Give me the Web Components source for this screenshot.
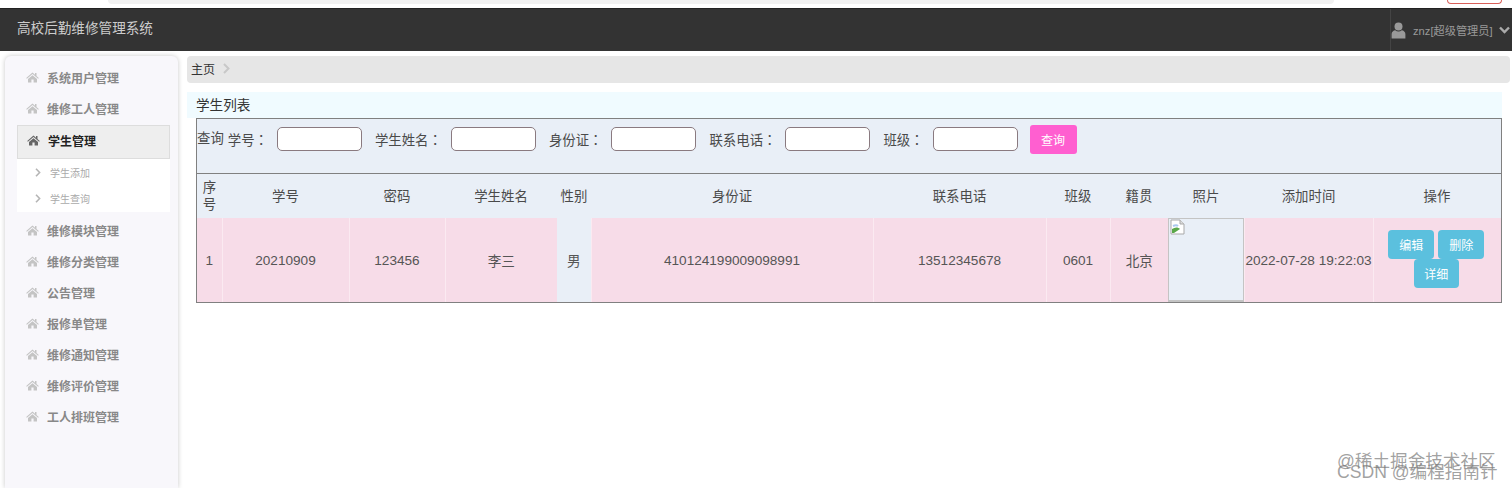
<!DOCTYPE html>
<html lang="zh">
<head>
<meta charset="utf-8">
<title>高校后勤维修管理系统</title>
<style>
  html, body { margin: 0; height: 100%; background: #fff; overflow: hidden; }
  body { font-family: "Liberation Sans", "Noto Sans CJK SC", sans-serif; font-size: 13px; color: #333; }
</style>
</head>
<body>
<admin-app></admin-app>

<template id="home-icon">
  <svg width="13" height="11" viewBox="0 0 13 11" fill="currentColor"><path d="M6.5 0.6 0.2 6l.7.8L6.5 2.1l5.6 4.7.7-.8-2.3-2V1H9v1.7zM2 7v3.6h3.4V7.6h2.2v3H11V7L6.5 3.2z"/></svg>
</template>

<script>
// top browser strip + dark header bar
class TopBar extends HTMLElement {
  constructor() {
    super();
    this.attachShadow({mode: "open"}).innerHTML = `
      <style>
        :host { display: block; }
        #strip { height: 8px; display: flex; background: #fff; }
        #tab { margin-left: 108px; width: 1226px; height: 4px; background: #f1f1f1; border-radius: 0 0 6px 6px; }
        #pill { margin-left: 113px; width: 53px; height: 3px; border: 1px solid #d9605a; border-top: 0; border-radius: 0 0 9px 9px; }
        #bar { height: 43px; background: #333; border-top: 1px solid #222; box-sizing: border-box; display: flex; align-items: center; justify-content: space-between; }
        #brand { margin-left: 17px; margin-top: -6px; color: #ccc; font-size: 13.6px; }
        #user { height: 100%; width: 122px; box-sizing: border-box; border-left: 1px solid #444; display: flex; align-items: center; color: #999; font-size: 11.2px; }
        #user svg.u { flex: none; }
        #name { margin-left: 7px; white-space: nowrap; }
        #user svg.c { margin-left: 6px; flex: none; }
      </style>
      <div id="strip"><div id="tab"></div><div id="pill"></div></div>
      <div id="bar">
        <div id="brand">高校后勤维修管理系统</div>
        <div id="user">
          <svg class="u" width="15" height="17" viewBox="0 0 15 17" fill="#999"><circle cx="7.5" cy="4.5" r="4"/><path d="M0.6 16.5V12c0-2.2 2-3.6 3.6-3.8 1 .8 2.1 1.2 3.3 1.2s2.300-.4 3.300-1.200c1.600.2 3.600 1.600 3.600 3.800v4.500z"/></svg>
          <span id="name">znz[超级管理员]</span>
          <svg class="c" width="11" height="8" viewBox="0 0 11 8" fill="none" stroke="#aaa" stroke-width="2.4"><path d="M1 1.500 5.500 6 10 1.500"/></svg>
        </div>
      </div>`;
  }
}
customElements.define("top-bar", TopBar);

// one left menu entry
class NavItem extends HTMLElement {
  constructor() {
    super();
    const icon = document.getElementById("home-icon").innerHTML;
    this.attachShadow({mode: "open"}).innerHTML = `
      <style>
        :host { display: flex; align-items: center; height: 31px; padding-left: 21px; color: #888; font-size: 12px; font-weight: bold; }
        :host([active]) { height: 34px; margin: 1px 8px 0 12px; padding-left: 9px; padding-bottom: 4px; background: #eee; color: #222; border: 1px solid #ddd; box-sizing: border-box; }
        svg, .i { display: block; }
        .i { color: #c4c4c4; width: 13px; height: 11px; margin-right: 8px; }
        :host([active]) .i { color: #666; }
      </style>
      <span class="i">${icon}</span><slot></slot>`;
  }
}
customElements.define("nav-item", NavItem);

class SubItem extends HTMLElement {
  constructor() {
    super();
    this.attachShadow({mode: "open"}).innerHTML = `
      <style>
        :host { display: flex; align-items: center; height: 26px; padding-left: 18px; color: #aaa; font-size: 10px; }
        svg { margin-right: 9px; }
      </style>
      <svg width="6" height="9" viewBox="0 0 6 9" fill="none" stroke="#b5b5b5" stroke-width="1.600"><path d="M1 .8 4.600 4.500 1 8.200"/></svg><slot></slot>`;
  }
}
customElements.define("sub-item", SubItem);

class SideNav extends HTMLElement {
  constructor() {
    super();
    this.attachShadow({mode: "open"}).innerHTML = `
      <style>
        :host { display: block; width: 173px; margin-left: 5px; background: #f8f7fb; border-radius: 6px 6px 0 0; box-shadow: 0 0 5px rgba(0,0,0,.22); padding-top: 6px; box-sizing: border-box; height: 432px; flex: none; }
        #sub { margin: 0 8px 3px 12px; background: #fff; height: 53px; }
      </style>
      <nav-item>系统用户管理</nav-item>
      <nav-item>维修工人管理</nav-item>
      <nav-item active>学生管理</nav-item>
      <div id="sub"><sub-item>学生添加</sub-item><sub-item>学生查询</sub-item></div>
      <nav-item>维修模块管理</nav-item>
      <nav-item>维修分类管理</nav-item>
      <nav-item>公告管理</nav-item>
      <nav-item>报修单管理</nav-item>
      <nav-item>维修通知管理</nav-item>
      <nav-item>维修评价管理</nav-item>
      <nav-item>工人排班管理</nav-item>`;
  }
}
customElements.define("side-nav", SideNav);

class BreadCrumb extends HTMLElement {
  constructor() {
    super();
    this.attachShadow({mode: "open"}).innerHTML = `
      <style>
        :host { display: flex; align-items: center; height: 27px; box-sizing: border-box; padding: 0 0 2px 4px; background: #e6e6e6; border-radius: 4px; color: #333; font-size: 12px; }
        svg { margin-left: 8px; }
      </style>
      <slot></slot>
      <svg width="7" height="11" viewBox="0 0 7 11" fill="none" stroke="#c8c8c8" stroke-width="2"><path d="M1 1l4.500 4.500L1 10"/></svg>`;
  }
}
customElements.define("bread-crumb", BreadCrumb);

// label comes in the attribute so the colon can get the centred TC glyph
class SearchField extends HTMLElement {
  constructor() {
    super();
    this.attachShadow({mode: "open"}).innerHTML = `
      <style>
        :host { display: flex; align-items: center; color: #4a4a4a; font-size: 13.4px; white-space: nowrap; }
        #label { margin-top: -1px; }
        #colon { font-family: "Liberation Sans", "Noto Sans CJK TC", sans-serif; }
        input { width: 85px; height: 24px; box-sizing: border-box; margin-left: 9px; border: 1px solid #8a7a80; border-radius: 5px; background: #fff; padding: 0; }
      </style>
      <span id="label"></span><input type="text">`;
  }
  connectedCallback() {
    this.shadowRoot.getElementById("label").innerHTML = `${this.getAttribute("label")}<span id="colon" lang="zh-TW">：</span>`;
  }
}
customElements.define("search-field", SearchField);

class ActBtn extends HTMLElement {
  constructor() {
    super();
    this.attachShadow({mode: "open"}).innerHTML = `
      <style>
        :host { display: inline-flex; align-items: center; justify-content: center; width: 46px; height: 29px; background: #5bc0de; border-radius: 4px; color: #fff; font-size: 12px; }
      </style>
      <slot></slot>`;
  }
}
customElements.define("act-btn", ActBtn);

// panel with search row and the list table
class StudentList extends HTMLElement {
  constructor() {
    super();
    const heads = ["序<br>号","学号","密码","学生姓名","性别","身份证","联系电话","班级","籍贯","照片","添加时间","操作"];
    const widths = [25,127,96,112,34,282,173,64,58,76,129,128];
    const row = ["1","20210909","123456","李三","男","410124199009098991","13512345678","0601","北京"];
    this.attachShadow({mode: "open"}).innerHTML = `
      <style>
        :host { display: block; margin: 9px 8px 0 0; }
        #title { height: 26px; box-sizing: border-box; padding: 7px 0 0 9px; background: #f0fbff; color: #333; font-size: 13.6px; line-height: 14px; }
        #box { margin-left: 9px; border: 1px solid #808080; background: #e9eff7; color: #4a4a4a; }
        #search { height: 55px; box-sizing: border-box; padding: 7px 0 0 0; display: flex; align-items: flex-start; border-bottom: 1px solid #808080; font-size: 13.4px; }
        #q { line-height: 26px; margin-right: 4px; white-space: nowrap; }
        search-field { height: 26px; margin-right: 13px; }
        #go { width: 47px; height: 29px; margin: -1px 0 0 -1px; background: #ff5fd0; border-radius: 3px; color: #fff; font-size: 12px; display: flex; align-items: center; justify-content: center; }
        table { border-collapse: collapse; table-layout: fixed; width: 1304px; font-size: 13.4px; }
        th { font-weight: normal; height: 44px; padding: 0; text-align: center; line-height: 17px; }
        td { height: 84px; padding: 0; text-align: center; background: #f7dce8; border-left: 1px solid #fbeaf1; white-space: nowrap; font-size: 13.6px; color: #555; }
        td:first-child { border-left: 0; }
        td.plain { background: #e9eff7; border-left: 0; }
        #photo { width: 76px; height: 84px; box-sizing: border-box; border: 1px solid #c4c4c4; border-bottom-width: 2px; background: #e9eff7; padding: 0 0 0 1px; }
        #photo svg { display: block; }
        #ops { display: flex; flex-wrap: wrap; justify-content: center; gap: 0 4px; padding: 0 16px 0 14px; margin-top: -2px; }
        #ops act-btn:last-child { width: 45px; }
      </style>
      <div id="title">学生列表</div>
      <div id="box">
        <div id="search">
          <span id="q">查询</span>
          <search-field label="学号"></search-field>
          <search-field label="学生姓名"></search-field>
          <search-field label="身份证"></search-field>
          <search-field label="联系电话"></search-field>
          <search-field label="班级"></search-field>
          <div id="go">查询</div>
        </div>
        <table>
          <colgroup>${widths.map(w => `<col style="width:${w}px">`).join("")}</colgroup>
          <tr>${heads.map(h => `<th>${h}</th>`).join("")}</tr>
          <tr>
            ${row.map((c, i) => `<td${i === 4 ? ' class="plain"' : ""}>${c}</td>`).join("")}
            <td class="plain"><div id="photo">
              <svg width="16" height="16" viewBox="0 0 16 16"><path d="M1 1h9l4 4v10H1z" fill="#fff" stroke="#a9a9a9"/><path d="M10 1v4h4" fill="#ddd" stroke="#a9a9a9"/><path d="M2 14V10c3 -2 6 -2 8 0l-6 4z" fill="#5aa84a"/><path d="M3 7c2-1 4-1 5 0" stroke="#a9c8ee" fill="none" stroke-width="2"/></svg>
            </div></td>
            <td>2022-07-28 19:22:03</td>
            <td><div id="ops"><act-btn>编辑</act-btn><act-btn>删除</act-btn><act-btn>详细</act-btn></div></td>
          </tr>
        </table>
      </div>`;
  }
}
customElements.define("student-list", StudentList);

// translucent overlapping watermarks at the bottom right
class WaterMark extends HTMLElement {
  constructor() {
    super();
    this.attachShadow({mode: "open"}).innerHTML = `
      <style>
        :host { position: absolute; left: 1336px; top: 450px; width: 176px; height: 38px; color: rgba(120,120,120,.7); font-size: 17.6px; line-height: 20px; white-space: nowrap; }
        div { position: absolute; }
        #a { left: 1px; top: 1px; }
        #b { left: 1px; top: 12px; }
      </style>
      <div id="a">@稀土掘金技术社区</div>
      <div id="b">CSDN @编程指南针</div>`;
  }
}
customElements.define("water-mark", WaterMark);

class AdminApp extends HTMLElement {
  constructor() {
    super();
    this.attachShadow({mode: "open"}).innerHTML = `
      <style>
        :host { display: block; }
        #body { display: flex; margin-top: 5px; }
        main { flex: 1; min-width: 0; margin-left: 9px; padding-right: 2px; }
      </style>
      <top-bar></top-bar>
      <div id="body">
        <side-nav></side-nav>
        <main>
          <bread-crumb>主页</bread-crumb>
          <student-list></student-list>
        </main>
      </div>
      <water-mark></water-mark>`;
  }
}
customElements.define("admin-app", AdminApp);
</script>
</body>
</html>
